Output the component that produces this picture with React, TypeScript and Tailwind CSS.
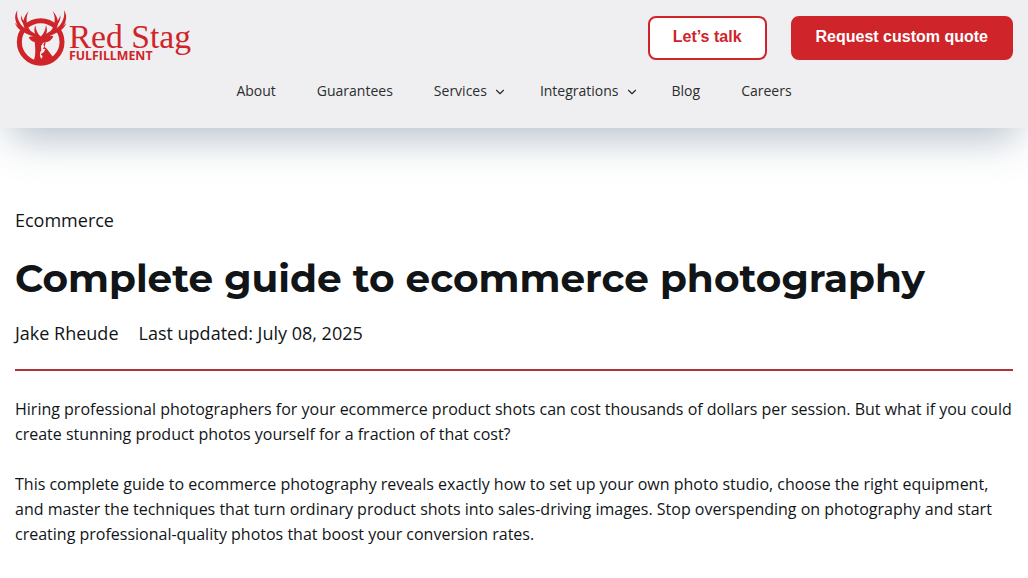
import { ChevronDown } from "lucide-react";

type NavItem = {
  label: string;
  hasMenu?: boolean;
};

const NAV_ITEMS: NavItem[] = [
  { label: "About" },
  { label: "Guarantees" },
  { label: "Services", hasMenu: true },
  { label: "Integrations", hasMenu: true },
  { label: "Blog" },
  { label: "Careers" },
];

const PARAGRAPHS = [
  "Hiring professional photographers for your ecommerce product shots can cost thousands of dollars per session. But what if you could create stunning product photos yourself for a fraction of that cost?",
  "This complete guide to ecommerce photography reveals exactly how to set up your own photo studio, choose the right equipment, and master the techniques that turn ordinary product shots into sales-driving images. Stop overspending on photography and start creating professional-quality photos that boost your conversion rates.",
];

function Logo() {
  return (
    <svg
      viewBox="45 30 528 168"
      className="h-14 w-44 overflow-visible fill-[#cf242a]"
      role="img"
      aria-label="Red Stag Fulfillment"
    >
      {/* ring */}
      <circle cx="122" cy="126" r="64" fill="none" stroke="#cf242a" strokeWidth="15" />
      {/* gap between the ring and the antlers */}
      <g fill="none" stroke="#efeff1" strokeWidth="17" strokeLinecap="round">
        <path d="M84 90C72 86 60 78 54 62" />
        <path d="M160 90C172 86 184 78 190 62" />
      </g>
      {/* antlers */}
      <g>
        <path d="M117 120C112 112 99 110 88 105C66 96 51 80 47 62C44 52 45 42 52 31C50 44 52 54 57 64C61 73 67 80 74 85C66 69 70 51 86 33C78 50 78 67 85 80C87 87 91 93 98 97C104 101 113 104 120 110Z" />
        <path d="M127 120C132 112 145 110 156 105C178 96 193 80 197 62C200 52 199 42 192 31C194 44 192 54 187 64C183 73 177 80 170 85C178 69 174 51 158 33C166 50 166 67 159 80C157 87 153 93 146 97C140 101 131 104 124 110Z" />
        <path d="M78 97C61 93 50 84 45 68C54 79 64 84 76 87Z" />
        <path d="M166 97C183 93 194 84 199 68C190 79 180 84 168 87Z" />
        <path d="M75 78C66 68 61 58 63 45C66 57 71 63 78 68Z" />
        <path d="M169 78C178 68 183 58 181 45C178 57 173 63 166 68Z" />
        <path d="M115 115C104 106 100 92 106 76C108 91 112 101 121 109Z" />
        <path d="M129 115C140 106 144 92 138 76C136 91 132 101 123 109Z" />
      </g>
      {/* head, ears and neck */}
      <path d="M86 112C95 107 107 109 114 114L122 108L131 114C138 108 149 106 160 109C155 121 146 126 137 127L134 141L141 147L164 178C148 190 121 193 100 184C107 172 107 151 104 126C96 125 90 120 86 112Z" />
      <path
        className="fill-[#efeff1]"
        d="M134 126L130 134L133 139L129 147L136 147L132 156L122 163L128 169L124 177C118 168 119 157 124 151L123 139L128 130Z"
      />
      <text x="206" y="145" fontSize="101" className="font-['Liberation_Serif',serif]">
        Red Stag
      </text>
      <text x="207" y="180" fontSize="37" className="font-['Open_Sans',sans-serif] font-bold">
        FULFILLMENT
      </text>
    </svg>
  );
}

function Header() {
  return (
    <header className="bg-[#efeff1] px-[15px] pt-2.5 pb-6 shadow-[0_20px_40px_-10px_rgba(39,71,102,0.35)]">
      <div className="flex items-center justify-between">
        <a href="#">
          <Logo />
        </a>
        <div className="flex gap-6 font-['Liberation_Sans',Arial,sans-serif] text-base font-bold">
          <button className="h-11 rounded-lg border-2 border-[#cf242a] bg-white px-[23px] pb-0.5 text-[#cf242a]">
            Let’s talk
          </button>
          <button className="h-11 rounded-lg border-2 border-[#cf242a] bg-[#cf242a] px-[23px] pb-0.5 text-white">
            Request custom quote
          </button>
        </div>
      </div>

      <nav className="mt-3 flex justify-center gap-[41px] text-sm leading-[26px] text-[#2b2d2f]">
        {NAV_ITEMS.map((item) => (
          <a key={item.label} href="#" className="flex items-center">
            {item.label}
            {item.hasMenu && (
              <ChevronDown className="mt-0.5 -mr-2 ml-1.5 size-3.5" strokeWidth={2} />
            )}
          </a>
        ))}
      </nav>
    </header>
  );
}

export default function App() {
  return (
    <div className="min-h-screen bg-white font-['Open_Sans',sans-serif] text-[#111517]">
      <Header />
      <main className="px-[15px] pt-[78px]">
        <a href="#" className="block text-lg">
          Ecommerce
        </a>
        <h1 className="mt-4 font-[Montserrat,Inter,sans-serif] text-[39px] leading-[56px] font-bold">
          Complete guide to ecommerce photography
        </h1>
        <div className="mt-[13px] flex gap-5 border-b-2 border-[#b5313a] pb-[22px] text-lg">
          <a href="#">Jake Rheude</a>
          <span>Last updated: July 08, 2025</span>
        </div>
        <div className="mt-[26px] space-y-[25px] text-base leading-[25px]">
          {PARAGRAPHS.map((text) => (
            <p key={text}>{text}</p>
          ))}
        </div>
      </main>
    </div>
  );
}
